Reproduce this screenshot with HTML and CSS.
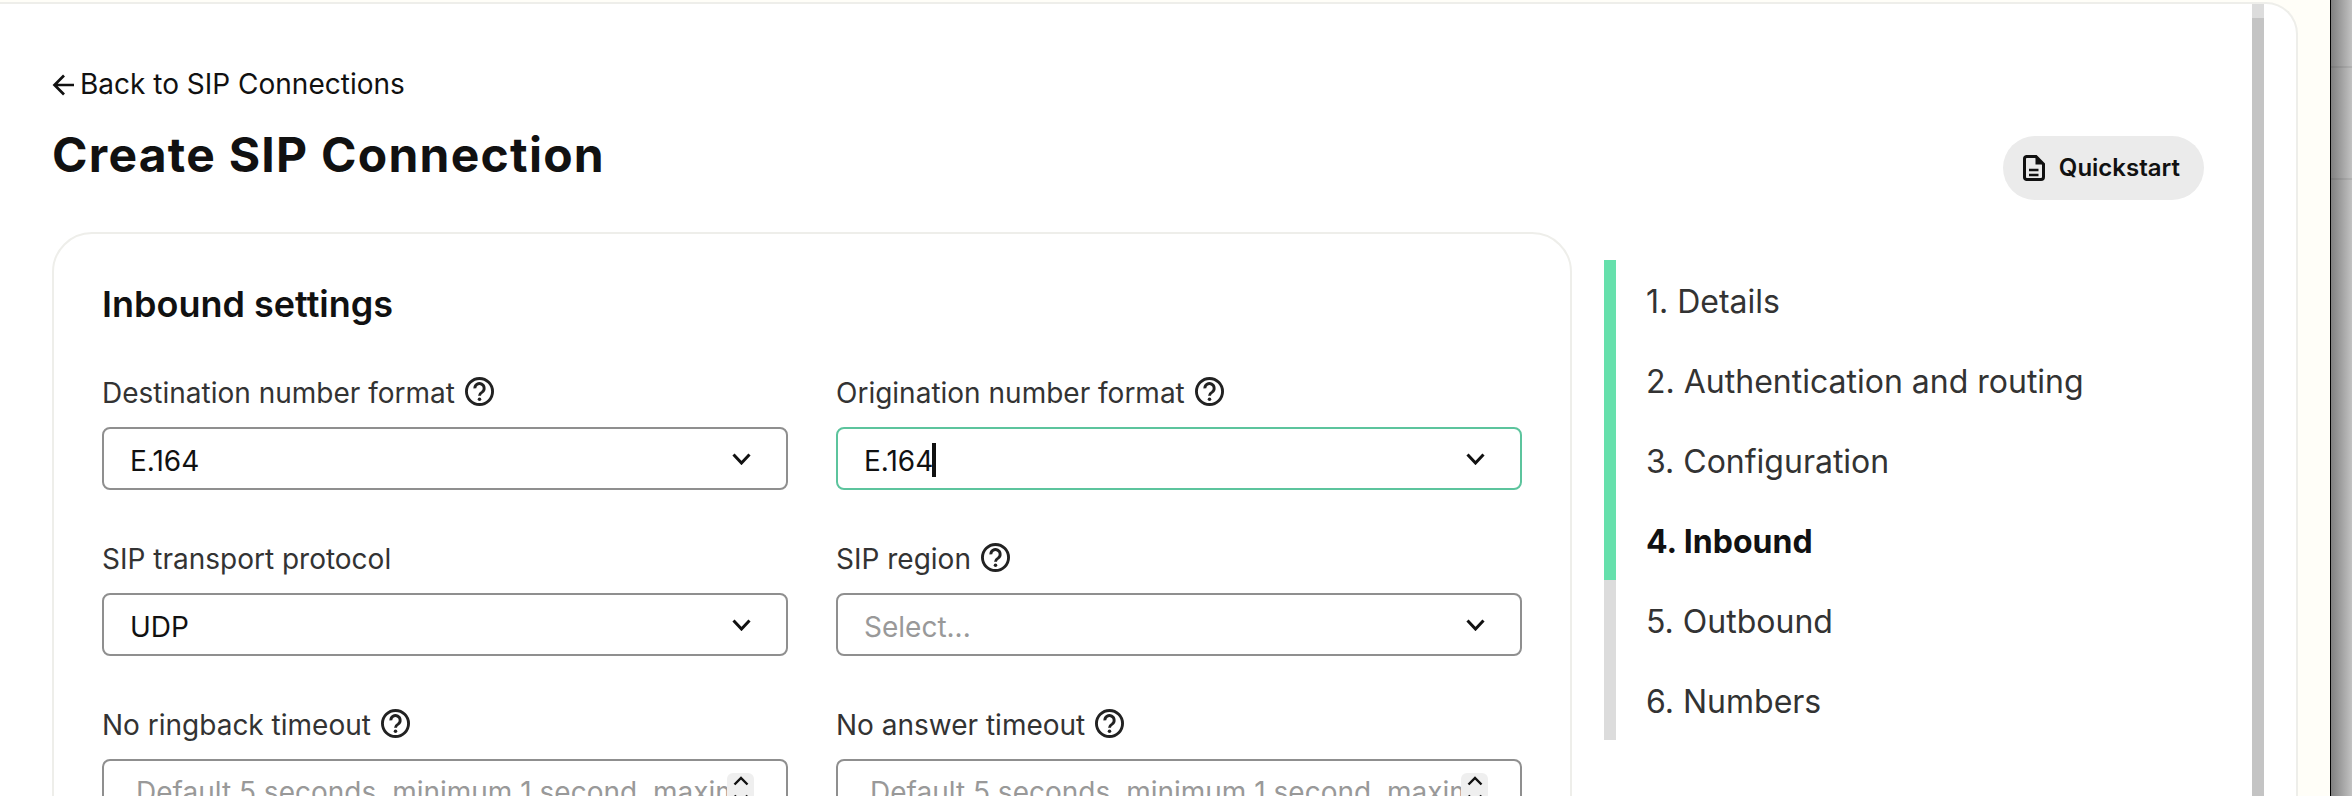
FILE: index.html
```html
<!DOCTYPE html>
<html lang="en">
<head>
<meta charset="utf-8">
<title>Create SIP Connection</title>
<link rel="stylesheet" href="styles.css">
</head>
<body>
<div class="window">
  <div class="panel">
    <main class="content">
      <a class="back">
        <svg class="back-icon" width="22" height="22" viewBox="0 0 22 22"><path d="M22 11H2.500M12 1.500 2.500 11l9.500 9.500" fill="none" stroke="#111" stroke-width="2.700"/></svg>
        <span>Back to SIP Connections</span>
      </a>
      <header class="head">
        <h1 class="title">Create SIP Connection</h1>
        <button class="quick">
          <svg width="22" height="26" viewBox="0 0 22 26"><path d="M3.500 1.500H13L20.500 9V22a2.500 2.500 0 0 1-2.500 2.500H3.500A2.500 2.500 0 0 1 1.500 22V4A2.500 2.500 0 0 1 3.500 1.500Z" fill="none" stroke="#111" stroke-width="3"/><path d="M12.500 1.500V9.500H20.500Z" fill="#111"/><path d="M6 15H15.500M6 20H15.500" stroke="#111" stroke-width="2.600"/></svg>
          <span>Quickstart</span>
        </button>
      </header>
      <div class="columns">
        <section class="card">
          <h2 class="card-title">Inbound settings</h2>
          <div class="form">
            <div class="field">
              <div class="label">Destination number format <svg class="help" viewBox="0 0 28 28"><circle cx="14" cy="14" r="12.600" fill="none" stroke="#222" stroke-width="2.800"/><path d="M9.500 11a4.500 4.500 0 1 1 7 3.600c-1.600 1-2.500 1.800-2.500 3.400" fill="none" stroke="#222" stroke-width="2.800"/><circle cx="14" cy="21.500" r="1.700" fill="#222"/></svg></div>
              <div class="box"><span class="val">E.164</span><svg class="chev" viewBox="0 0 19 12"><path d="M1.500 1.500 9.500 10l8-8.500" fill="none" stroke="#111" stroke-width="3"/></svg></div>
            </div>
            <div class="field">
              <div class="label">Origination number format <svg class="help" viewBox="0 0 28 28"><circle cx="14" cy="14" r="12.600" fill="none" stroke="#222" stroke-width="2.800"/><path d="M9.500 11a4.500 4.500 0 1 1 7 3.600c-1.600 1-2.500 1.800-2.500 3.400" fill="none" stroke="#222" stroke-width="2.800"/><circle cx="14" cy="21.500" r="1.700" fill="#222"/></svg></div>
              <div class="box focus"><span class="val">E.164</span><span class="caret"></span><svg class="chev" viewBox="0 0 19 12"><path d="M1.500 1.500 9.500 10l8-8.500" fill="none" stroke="#111" stroke-width="3"/></svg></div>
            </div>
            <div class="field">
              <div class="label">SIP transport protocol</div>
              <div class="box"><span class="val">UDP</span><svg class="chev" viewBox="0 0 19 12"><path d="M1.500 1.500 9.500 10l8-8.500" fill="none" stroke="#111" stroke-width="3"/></svg></div>
            </div>
            <div class="field">
              <div class="label">SIP region <svg class="help" viewBox="0 0 28 28"><circle cx="14" cy="14" r="12.600" fill="none" stroke="#222" stroke-width="2.800"/><path d="M9.500 11a4.500 4.500 0 1 1 7 3.600c-1.600 1-2.500 1.800-2.500 3.400" fill="none" stroke="#222" stroke-width="2.800"/><circle cx="14" cy="21.500" r="1.700" fill="#222"/></svg></div>
              <div class="box"><span class="val muted">Select...</span><svg class="chev" viewBox="0 0 19 12"><path d="M1.500 1.500 9.500 10l8-8.500" fill="none" stroke="#111" stroke-width="3"/></svg></div>
            </div>
            <div class="field">
              <div class="label">No ringback timeout <svg class="help" viewBox="0 0 28 28"><circle cx="14" cy="14" r="12.600" fill="none" stroke="#222" stroke-width="2.800"/><path d="M9.500 11a4.500 4.500 0 1 1 7 3.600c-1.600 1-2.500 1.800-2.500 3.400" fill="none" stroke="#222" stroke-width="2.800"/><circle cx="14" cy="21.500" r="1.700" fill="#222"/></svg></div>
              <div class="box num"><span class="val muted clip">Default 5 seconds, minimum 1 second, maximum 120 seconds</span><span class="spin"><svg class="spin-up" viewBox="0 0 16 10"><path d="M1.500 8.500 8 2l6.500 6.500" fill="none" stroke="#111" stroke-width="2.400"/></svg><svg class="spin-down" viewBox="0 0 16 10"><path d="M1.500 1.500 8 8l6.500-6.500" fill="none" stroke="#111" stroke-width="2.400"/></svg></span></div>
            </div>
            <div class="field">
              <div class="label">No answer timeout <svg class="help" viewBox="0 0 28 28"><circle cx="14" cy="14" r="12.600" fill="none" stroke="#222" stroke-width="2.800"/><path d="M9.500 11a4.500 4.500 0 1 1 7 3.600c-1.600 1-2.500 1.800-2.500 3.400" fill="none" stroke="#222" stroke-width="2.800"/><circle cx="14" cy="21.500" r="1.700" fill="#222"/></svg></div>
              <div class="box num"><span class="val muted clip">Default 5 seconds, minimum 1 second, maximum 120 seconds</span><span class="spin"><svg class="spin-up" viewBox="0 0 16 10"><path d="M1.500 8.500 8 2l6.500 6.500" fill="none" stroke="#111" stroke-width="2.400"/></svg><svg class="spin-down" viewBox="0 0 16 10"><path d="M1.500 1.500 8 8l6.500-6.500" fill="none" stroke="#111" stroke-width="2.400"/></svg></span></div>
            </div>
          </div>
        </section>
        <ol class="steps">
          <li class="step done">1. Details</li>
          <li class="step done">2. Authentication and routing</li>
          <li class="step done">3. Configuration</li>
          <li class="step done active">4. Inbound</li>
          <li class="step">5. Outbound</li>
          <li class="step">6. Numbers</li>
        </ol>
      </div>
    </main>
    <div class="scrollbar"><div class="thumb"></div></div>
  </div>
</div>
<aside class="edge"><div class="edge-line one"></div><div class="edge-line two"></div></aside>
</body>
</html>
```

FILE: styles.css
```css
* { box-sizing: border-box; }
html, body { margin: 0; height: 796px; overflow: hidden; }
body {
  display: flex;
  background: #fffef8;
  font-family: Inter, "Liberation Sans", sans-serif;
  color: #111;
}
.window { flex: 1; min-width: 0; padding: 2px 32px 0 0; height: 796px; }
.panel {
  display: flex;
  height: 794px;
  background: #fff;
  border-top: 2px solid #eeeeea;
  border-right: 2px solid #eeeeea;
  border-top-right-radius: 32px;
  overflow: hidden;
}
.content { width: 2252px; flex: none; padding: 62px 48px 0 52px; }
.back { display: flex; align-items: center; gap: 6px; height: 36px; font-size: 28px; line-height: 36px; }
.back-icon { flex: none; margin-top: 2px; }
.head { display: flex; justify-content: space-between; align-items: flex-start; margin-top: 22px; height: 76px; }
.title { margin: 0; font-size: 48px; line-height: 62px; font-weight: 700; letter-spacing: 1.25px; color: #111; }
.quick {
  display: flex; align-items: center; gap: 14px;
  margin-top: 12px; height: 64px; padding: 0 24px 0 20px;
  border: 0; border-radius: 32px; background: #ebebeb;
  font: 600 24px/32px Inter, "Liberation Sans", sans-serif; color: #111;
}
.columns { display: flex; align-items: flex-start; margin-top: 32px; }
.card {
  flex: none; width: 1520px; height: 800px;
  padding: 47px 48px 0;
  border: 2px solid #eeeeea; border-radius: 40px;
}
.card-title { margin: 0 0 46px; font-size: 36px; line-height: 46px; font-weight: 600; color: #111; }
.form { display: grid; grid-template-columns: 1fr 1fr; column-gap: 48px; row-gap: 49px; }
.field { min-width: 0; }
.label { display: flex; align-items: center; gap: 10px; height: 36px; padding-top: 5px; margin-bottom: 18px; font-size: 28px; line-height: 31px; color: #333; }
.help { width: 29px; height: 29px; flex: none; margin-top: -4px; }
.box {
  display: flex; align-items: center; height: 63px; padding: 0 35px 0 26px;
  border: 2px solid #8f8f8f; border-radius: 8px; background: #fff;
  font-size: 28px; color: #111;
}
.box.focus { border-color: #5cc49d; }
.val { line-height: 36px; padding-top: 4px; white-space: nowrap; }
.muted { color: #999; }
.caret { width: 4px; height: 34px; margin: 2px 0 0 -1px; background: #111; }
.chev { width: 19px; height: 12px; margin-left: auto; flex: none; }
.box.num { padding: 0 32px 0 32px; align-items: flex-start; }
.clip { flex: 1; min-width: 0; overflow: hidden; padding-top: 13px; }
.spin { flex: none; display: flex; flex-direction: column; align-items: center; width: 27px; height: 60px; margin-top: 12px; padding-top: 3px; background: #efefef; border-radius: 6px 6px 0 0; }
.spin-up { width: 16px; height: 10px; }
.spin-down { width: 16px; height: 10px; margin-top: 8px; }
.steps { list-style: none; margin: 28px 0 0 32px; padding: 0; }
.step { display: flex; align-items: center; height: 80px; padding: 4px 0 0 30px; border-left: 12px solid #dcdcdc; font-size: 32px; line-height: 40px; color: #333; }
.step.done { border-left-color: #66e0ac; }
.step.active { font-weight: 650; color: #111; }
.scrollbar { flex: none; width: 12px; height: 100%; background: #dcdcdc; padding-top: 14px; }
.thumb { height: 100%; background: #c4c4c4; }
.edge {
  flex: none; width: 22px; height: 796px; position: relative;
  border-left: 1px solid #000;
  background: linear-gradient(to right, #808080, #c2c2c2);
}
.edge-line { position: absolute; left: 0; right: 0; height: 2px; background: rgba(0,0,0,.07); }
.edge-line.one { top: 66px; }
.edge-line.two { top: 178px; }
```
